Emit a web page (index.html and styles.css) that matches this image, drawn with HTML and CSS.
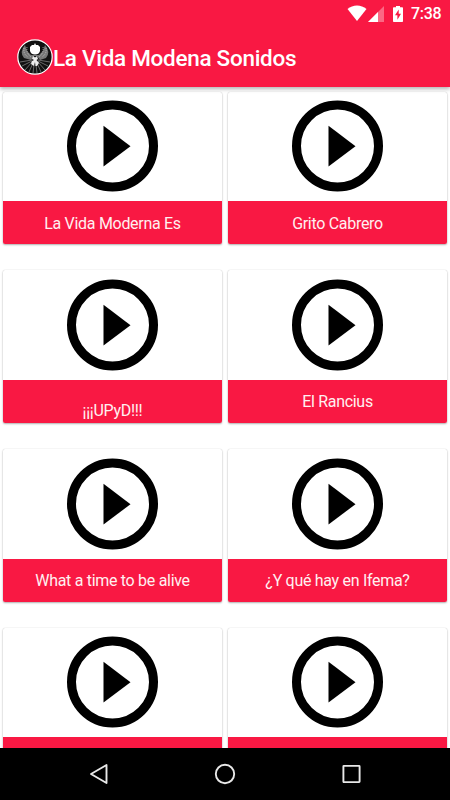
FILE: index.html
```html
<!DOCTYPE html>
<html lang="es">
<head>
<meta charset="utf-8">
<title>La Vida Modena Sonidos</title>
<link rel="stylesheet" href="styles.css">
</head>
<body>
<svg class="defs" width="0" height="0">
  <symbol id="play" viewBox="0 0 92 92">
    <circle cx="45.500" cy="46" r="41" fill="none" stroke="#000" stroke-width="9"/>
    <path d="M36.500 25.800V66.500L63.500 46.200Z"/>
  </symbol>
</svg>
<div class="screen">
  <header class="header">
    <div class="status">
      <svg class="wifi" width="20" height="17" viewBox="0 0 20 17"><path d="M0.500 4C5.800-.8 14.200-.8 19.500 4L10 16Z" fill="#fff"/></svg>
      <svg class="signal" width="16" height="16" viewBox="0 0 16 16"><path d="M16 0V16H0Z" fill="#fff" opacity=".35"/><path d="M10 6V16H0Z" fill="#fff"/></svg>
      <svg class="battery" width="10" height="16" viewBox="0 0 10 16"><path d="M3 0H7V1.200H9.200Q10 1.200 10 2V15.200Q10 16 9.200 16H.8Q0 16 0 15.200V2Q0 1.200 .8 1.200H3Z" fill="#fff"/><path d="M5.700 3.500L2 9.300H4.400V13.800L8 7.800H5.700Z" fill="#f91843"/></svg>
      <span class="time">7:38</span>
    </div>
    <div class="toolbar">
      <svg class="logo" width="36" height="36" viewBox="0 0 36 36">
        <circle cx="18" cy="18" r="17.200" fill="#111" stroke="#fff" stroke-width="1.200"/>
        <g stroke="#999" stroke-width=".65">
          <path d="M15 21L3 23M15 22L5 27M15 23L8 31M16 24L12 33M17 26L16 34M21 21L33 23M21 22L31 27M21 23L28 31M20 24L24 33M19 26L20 34"/>
        </g>
        <path d="M8 6Q2 13 7 19L14 21L17 17H20L23 21L29 19Q34 13 28 6L26 12L22 16H14L10 12Z" fill="#777"/>
        <path d="M7 9Q6 15 11 18M10 8Q9 14 14 18M29 9Q30 15 25 18M26 8Q27 14 22 18" fill="none" stroke="#ccc" stroke-width=".8" stroke-dasharray="1 1"/>
        <path d="M13 8L15 6H17L18 4L19 6H21L23 8V12Q22 15.500 18 15.500Q14 15.500 13 12Z" fill="#fff"/>
        <path d="M16 17L18 18.500L20 17L21 20L19.500 21L22 24L20 27H18.500L18 23L17 27L14 25L15 22L17 21L15 20Z" fill="#eee"/>
      </svg>
      <h1 class="title">La Vida Modena Sonidos</h1>
    </div>
  </header>
  <main class="grid">
    <article class="card"><div class="face"><svg class="play"><use href="#play"/></svg></div><div class="label">La Vida Moderna Es</div></article>
    <article class="card"><div class="face"><svg class="play"><use href="#play"/></svg></div><div class="label">Grito Cabrero</div></article>
    <article class="card"><div class="face"><svg class="play"><use href="#play"/></svg></div><div class="label low">¡¡¡UPyD!!!</div></article>
    <article class="card"><div class="face"><svg class="play"><use href="#play"/></svg></div><div class="label">El Rancius</div></article>
    <article class="card"><div class="face"><svg class="play"><use href="#play"/></svg></div><div class="label">What a time to be alive</div></article>
    <article class="card"><div class="face"><svg class="play"><use href="#play"/></svg></div><div class="label">¿Y qué hay en Ifema?</div></article>
    <article class="card"><div class="face"><svg class="play"><use href="#play"/></svg></div><div class="label"></div></article>
    <article class="card"><div class="face"><svg class="play"><use href="#play"/></svg></div><div class="label"></div></article>
  </main>
  <nav class="nav">
    <svg width="20" height="22" viewBox="0 0 20 22"><path d="M17.500 2V20L2 11Z"/></svg>
    <svg width="22" height="22" viewBox="0 0 22 22"><circle cx="11" cy="11" r="9.200"/></svg>
    <svg width="20" height="20" viewBox="0 0 20 20"><rect x="2.400" y="1.900" width="16.200" height="16.200" rx=".5"/></svg>
  </nav>
</div>
</body>
</html>
```
FILE: styles.css
```css
* { box-sizing: border-box; }
body { margin: 0; background: #fff; font-family: Roboto, "Liberation Sans", sans-serif; }
.defs { display: none; }
.screen { width: 450px; height: 800px; display: flex; flex-direction: column; overflow: hidden; }
.header {
  position: relative;
  z-index: 1;
  height: 87px;
  flex: none;
  background: #f91843;
  color: #fff;
  box-shadow: 0 2px 4px rgba(0, 0, 0, .3);
}
.status { height: 27px; display: flex; justify-content: flex-end; align-items: center; padding-right: 9px; }
.wifi { margin-right: 1px; }
.signal { margin-right: 9px; }
.battery { margin-right: 8px; }
.time { font-size: 16px; font-weight: 500; letter-spacing: -.3px; line-height: 27px; width: 30px; white-space: nowrap; }
.toolbar { height: 60px; display: flex; align-items: center; padding-left: 17px; }
.title { margin: 2px 0 0; font-size: 22.500px; font-weight: 500; letter-spacing: -.29px; line-height: 30px; }
.grid {
  flex: 1;
  min-height: 0;
  overflow: hidden;
  display: grid;
  grid-template-columns: 219px 219px;
  grid-auto-rows: 152.500px;
  gap: 26.300px 6px;
  padding: 4.500px 3px 0;
}
.card {
  display: flex;
  flex-direction: column;
  border-radius: 2px;
  overflow: hidden;
  background: #fff;
  box-shadow: 0 1px 2px rgba(0, 0, 0, .3), 0 0 1px rgba(0, 0, 0, .2);
}
.face { height: 109.500px; flex: none; display: flex; justify-content: center; padding-top: 8.500px; }
.play { width: 92px; height: 92px; }
.label {
  flex: 1;
  display: flex;
  align-items: center;
  justify-content: center;
  padding-top: 2px;
  background: #f91843;
  color: #fff0f0;
  font-size: 16px;
  letter-spacing: -.3px;
  line-height: 20px;
}
.label.low { padding-top: 20px; }
.nav {
  position: relative;
  z-index: 1;
  height: 52px;
  flex: none;
  display: flex;
  align-items: center;
  justify-content: space-between;
  padding: 0 89px;
  background: #000;
}
.nav svg { fill: none; stroke: #e8e8e8; stroke-width: 1.900; stroke-linejoin: round; }
```
